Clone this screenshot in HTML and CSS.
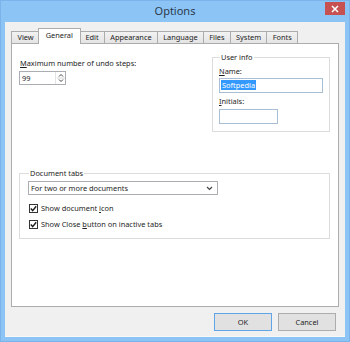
FILE: index.html
```html
<!DOCTYPE html>
<html lang="en">

<head>
  <meta charset="utf-8">
  <title>Options</title>
  <link rel="stylesheet" href="styles.css">
</head>

<body>
  <div class="window">
    <div class="titlebar">
      <span></span>
      <span class="title">Options</span>
      <button class="close">
        <svg width="8" height="8" viewBox="0 0 8 8"><path d="M1 1L7 7M7 1L1 7" stroke="#fff" stroke-width="1.6"/></svg>
      </button>
    </div>
    <div class="client">
      <div class="tabs">
        <div class="tab">View</div>
        <div class="tab active">General</div>
        <div class="tab">Edit</div>
        <div class="tab">Appearance</div>
        <div class="tab">Language</div>
        <div class="tab">Files</div>
        <div class="tab">System</div>
        <div class="tab">Fonts</div>
      </div>
      <div class="panel">
        <div class="top-row">
          <div class="undo">
            <div class="label"><u>M</u>aximum number of undo steps:</div>
            <div class="spin">
              <span class="spin-value">99</span>
              <span class="spin-arrows">
                <svg width="8" height="12" viewBox="0 0 8 12">
                  <path d="M2 4.5L4 2.5L6 4.5" fill="none" stroke="#444" stroke-width="1"/>
                  <path d="M0 6H8" stroke="#d6d6d6" stroke-width="1"/>
                  <path d="M2 7.5L4 9.5L6 7.5" fill="none" stroke="#444" stroke-width="1"/>
                </svg>
              </span>
            </div>
          </div>
          <fieldset class="group user-info">
            <legend>User info</legend>
            <div class="label"><u>N</u>ame:</div>
            <div class="textbox name"><span class="selected">Softpedia</span></div>
            <div class="label initials-label"><u>I</u>nitials:</div>
            <div class="textbox initials"></div>
          </fieldset>
        </div>
        <fieldset class="group doc-tabs">
          <legend>Document tabs</legend>
          <div class="combo">
            <span>For two or more documents</span>
            <svg width="7" height="5" viewBox="0 0 7 5"><path d="M1 1L3.5 3.5L6 1" fill="none" stroke="#444" stroke-width="1.2"/></svg>
          </div>
          <div class="check">
            <span class="box"><svg width="7" height="7" viewBox="0 0 7 7"><path d="M0.8 3.6L2.7 5.6L6.2 1.2" fill="none" stroke="#222" stroke-width="1.5"/></svg></span>
            <span>Show document <u>i</u>con</span>
          </div>
          <div class="check">
            <span class="box"><svg width="7" height="7" viewBox="0 0 7 7"><path d="M0.8 3.6L2.7 5.6L6.2 1.2" fill="none" stroke="#222" stroke-width="1.5"/></svg></span>
            <span>Show Close <u>b</u>utton on inactive tabs</span>
          </div>
        </fieldset>
      </div>
      <div class="buttons">
        <button class="btn default">OK</button>
        <button class="btn">Cancel</button>
      </div>
    </div>
  </div>
</body>

</html>
```

FILE: styles.css
```css
body {
  margin: 0;
  font-family: 'Noto Sans', 'Liberation Sans', sans-serif;
  font-size: 7.4px;
  color: #1e1e1e;
}

.window {
  width: 350px;
  height: 342px;
  box-sizing: border-box;
  background-color: #8cc4f6;
  border: 1px solid #7ab4ea;
  padding: 0 4px 4px;
  display: flex;
  flex-direction: column;
}

.titlebar {
  height: 21px;
  display: grid;
  grid-template-columns: 1fr auto 1fr;
  align-items: start;
}

.title {
  font-size: 11px;
  line-height: 19px;
  color: #2b3a4a;
}

.close {
  justify-self: end;
  width: 20px;
  height: 13px;
  margin-top: 1px;
  border: none;
  padding: 0;
  background-color: #c75050;
  display: flex;
  align-items: center;
  justify-content: center;
}

.client {
  flex: 1;
  background-color: #f0f0f0;
  border-bottom: 1px solid #f8f8f8;
  display: flex;
  flex-direction: column;
  padding: 7px 6px 0;
}

.tabs {
  display: flex;
  align-items: flex-end;
  height: 14px;
}

.tab {
  height: 11px;
  line-height: 11px;
  padding: 0 5px 0 5.5px;
  border: 1px solid #acacac;
  border-bottom: none;
  margin-left: -1px;
  background: linear-gradient(#f2f2f2, #e4e4e4);
}

.tab:first-child {
  margin-left: 0;
}

.tab.active {
  height: 15px;
  line-height: 13px;
  padding: 0 7px;
  margin: 0 -1px -1px -2px;
  background: #fff;
  position: relative;
  z-index: 1;
}

.panel {
  height: 264px;
  box-sizing: border-box;
  background-color: #fff;
  border: 1px solid #acacac;
  padding: 8px 8px 0 7px;
  display: flex;
  flex-direction: column;
}

.top-row {
  display: flex;
  justify-content: space-between;
  align-items: flex-start;
}

.label {
  line-height: 11px;
}

.undo {
  margin-top: 6px;
  padding-left: 1px;
}

.spin {
  margin-top: 2px;
  margin-left: -1px;
  width: 47px;
  height: 14px;
  box-sizing: border-box;
  border: 1px solid #abadb3;
  display: flex;
}

.spin-value {
  flex: 1;
  line-height: 12px;
  padding-left: 2px;
}

.spin-arrows {
  width: 9px;
  display: flex;
  align-items: center;
  justify-content: center;
  border-left: 1px solid #e3e3e3;
}

.group {
  margin: 0;
  border: 1px solid #dcdcdc;
  min-width: 0;
}

.group legend {
  line-height: 11px;
  padding: 0 1px;
  margin-left: 1px;
}

.user-info {
  width: 118px;
  box-sizing: border-box;
  padding: 3px 6px 7px;
}

.textbox {
  margin-top: 1px;
  height: 15px;
  box-sizing: border-box;
  border: 1px solid #a9bdd4;
  padding: 1px;
  line-height: 11px;
}

.name {
  width: 104px;
}

.selected {
  background-color: #3399ff;
  color: #fff;
  padding: 0 1px;
}

.initials-label {
  margin-top: 3px;
}

.initials {
  margin-top: 2px;
  width: 59px;
}

.doc-tabs {
  margin-top: 36px;
  padding: 2px 8px 6px;
}

.combo {
  width: 190px;
  height: 14px;
  box-sizing: border-box;
  border: 1px solid #abadb3;
  display: flex;
  align-items: center;
  justify-content: space-between;
  padding: 0 4px 0 2px;
}

.check {
  display: flex;
  align-items: center;
  height: 16px;
  padding-left: 1px;
}

.combo + .check {
  margin-top: 5px;
}

.box {
  width: 9px;
  height: 9px;
  box-sizing: border-box;
  border: 1px solid #333;
  margin-right: 3px;
  display: flex;
  align-items: center;
  justify-content: center;
  background: #fff;
}

.buttons {
  display: flex;
  justify-content: flex-end;
  gap: 6px;
  margin-top: 6px;
  padding-right: 3px;
}

.btn {
  width: 58px;
  height: 18px;
  padding: 0;
  border: 1px solid #adadad;
  background-color: #e1e1e1;
  font-family: inherit;
  font-size: 7.4px;
  color: #1e1e1e;
}

.btn.default {
  border-color: #5fa5e8;
}
```
